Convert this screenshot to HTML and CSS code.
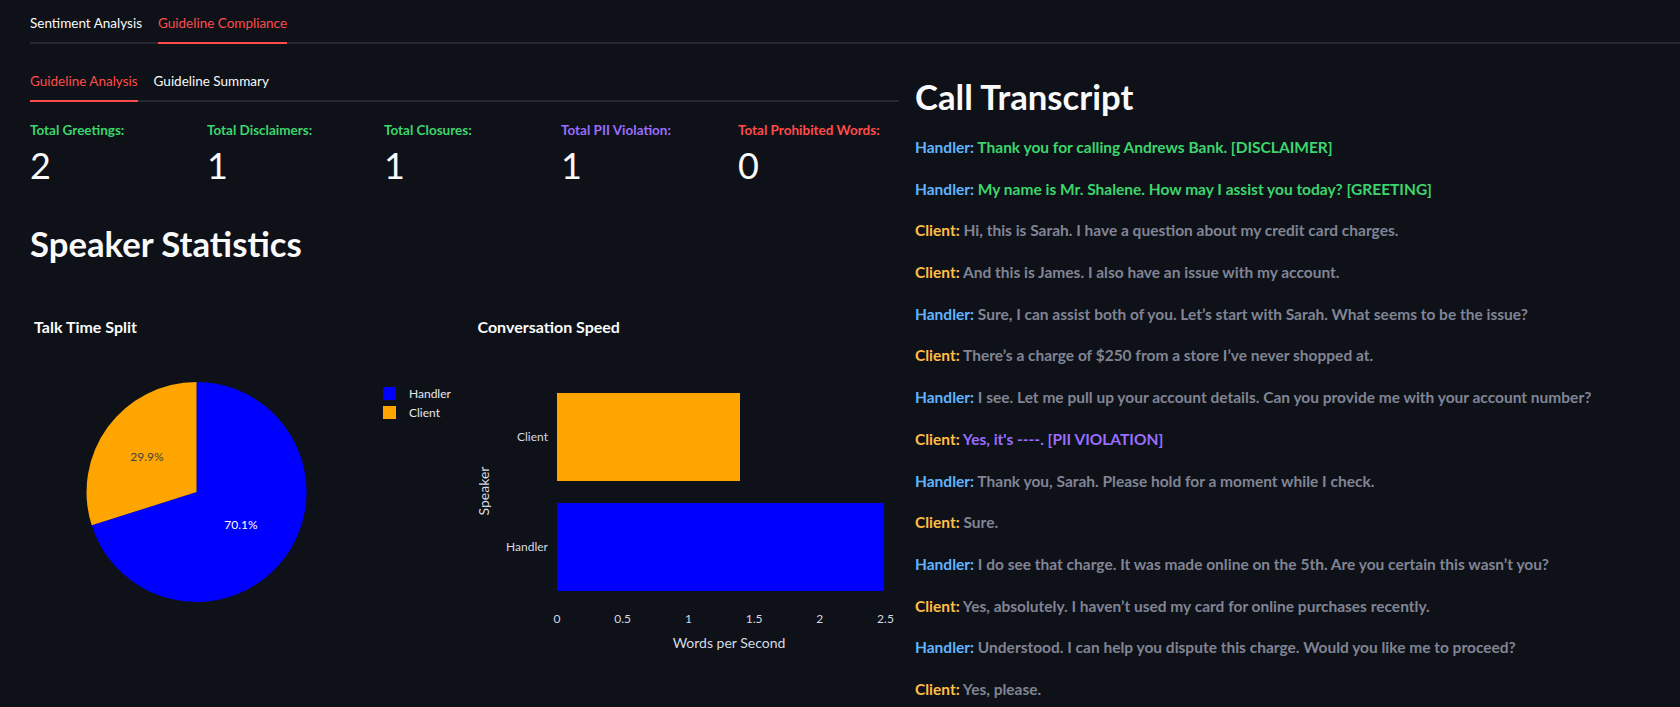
FILE: index.html
```html
<!DOCTYPE html>
<html lang="en">
<head>
<meta charset="utf-8">
<title>Guideline Compliance</title>
<link rel="stylesheet" href="styles.css">
</head>
<body>
<div class="main">
  <div class="tabs tabs-top">
    <div class="tab">Sentiment Analysis</div>
    <div class="tab active">Guideline Compliance</div>
  </div>
  <div class="content">
    <div class="col-left">
      <div class="tabs tabs-sub">
        <div class="tab active">Guideline Analysis</div>
        <div class="tab">Guideline Summary</div>
      </div>
      <div class="metrics">
        <div class="metric"><div class="metric-label green">Total Greetings:</div><div class="metric-value">2</div></div>
        <div class="metric"><div class="metric-label green">Total Disclaimers:</div><div class="metric-value">1</div></div>
        <div class="metric"><div class="metric-label green">Total Closures:</div><div class="metric-value">1</div></div>
        <div class="metric"><div class="metric-label violet">Total PII Violation:</div><div class="metric-value">1</div></div>
        <div class="metric"><div class="metric-label red">Total Prohibited Words:</div><div class="metric-value">0</div></div>
      </div>
      <h2 class="heading stats-heading">Speaker Statistics</h2>
      <div class="charts">
        <div class="chart">
          <div class="chart-title pie-title">Talk Time Split</div>
          <svg class="chart-svg" width="426" height="330" viewBox="0 0 426 330">
            <path d="M166.5 155 L166.5 45 A110 110 0 1 1 61.7 188.3 Z" fill="#0000ff"/>
            <path d="M166.5 155 L61.7 188.3 A110 110 0 0 1 166.5 45 Z" fill="#ffa500"/>
            <text x="117" y="124" class="pie-label dark" text-anchor="middle">29.9%</text>
            <text x="211" y="192" class="pie-label" text-anchor="middle">70.1%</text>
            <rect x="353" y="50" width="13" height="13" fill="#0000ff"/>
            <rect x="353" y="69" width="13" height="13" fill="#ffa500"/>
            <text x="379" y="61" class="legend">Handler</text>
            <text x="379" y="80" class="legend">Client</text>
          </svg>
        </div>
        <div class="chart">
          <div class="chart-title">Conversation Speed</div>
          <svg class="chart-svg" width="426" height="330" viewBox="0 0 426 330">
            <rect x="84" y="56" width="183" height="88" fill="#ffa500"/>
            <rect x="84" y="166" width="327" height="88" fill="#0000ff"/>
            <text x="75" y="104" class="tick" text-anchor="end">Client</text>
            <text x="75" y="214" class="tick" text-anchor="end">Handler</text>
            <text x="84" y="286" class="tick" text-anchor="middle">0</text>
            <text x="149.7" y="286" class="tick" text-anchor="middle">0.5</text>
            <text x="215.4" y="286" class="tick" text-anchor="middle">1</text>
            <text x="281.1" y="286" class="tick" text-anchor="middle">1.5</text>
            <text x="346.8" y="286" class="tick" text-anchor="middle">2</text>
            <text x="412.5" y="286" class="tick" text-anchor="middle">2.5</text>
            <text x="256" y="311" class="axis-title" text-anchor="middle">Words per Second</text>
            <text x="0" y="0" class="axis-title" text-anchor="middle" transform="translate(16 154) rotate(-90)">Speaker</text>
          </svg>
        </div>
      </div>
    </div>
    <div class="col-right">
      <h2 class="heading transcript-heading">Call Transcript</h2>
      <div class="transcript">
        <p class="line green"><span class="spk handler">Handler:</span> Thank you for calling Andrews Bank. [DISCLAIMER]</p>
        <p class="line green"><span class="spk handler">Handler:</span> My name is Mr. Shalene. How may I assist you today? [GREETING]</p>
        <p class="line gray"><span class="spk client">Client:</span> Hi, this is Sarah. I have a question about my credit card charges.</p>
        <p class="line gray"><span class="spk client">Client:</span> And this is James. I also have an issue with my account.</p>
        <p class="line gray"><span class="spk handler">Handler:</span> Sure, I can assist both of you. Let’s start with Sarah. What seems to be the issue?</p>
        <p class="line gray"><span class="spk client">Client:</span> There’s a charge of $250 from a store I’ve never shopped at.</p>
        <p class="line gray"><span class="spk handler">Handler:</span> I see. Let me pull up your account details. Can you provide me with your account number?</p>
        <p class="line violet"><span class="spk client">Client:</span> Yes, it's ----. [PII VIOLATION]</p>
        <p class="line gray"><span class="spk handler">Handler:</span> Thank you, Sarah. Please hold for a moment while I check.</p>
        <p class="line gray"><span class="spk client">Client:</span> Sure.</p>
        <p class="line gray"><span class="spk handler">Handler:</span> I do see that charge. It was made online on the 5th. Are you certain this wasn’t you?</p>
        <p class="line gray"><span class="spk client">Client:</span> Yes, absolutely. I haven’t used my card for online purchases recently.</p>
        <p class="line gray"><span class="spk handler">Handler:</span> Understood. I can help you dispute this charge. Would you like me to proceed?</p>
        <p class="line gray"><span class="spk client">Client:</span> Yes, please.</p>
      </div>
    </div>
  </div>
</div>
</body>
</html>
```
FILE: styles.css
```css
html, body {
  margin: 0;
  padding: 0;
  background: #0e1117;
  color: #fafafa;
  font-family: Lato, "Noto Sans", "Liberation Sans", sans-serif;
  overflow: hidden;
}

.main {
  padding-left: 30px;
  width: 1650px;
  height: 707px;
  overflow: hidden;
}

.tabs {
  display: flex;
  gap: 16px;
  border-bottom: 2px solid #262830;
}

.tab {
  font-size: 13.5px;
  line-height: 20px;
  color: #fafafa;
  border-bottom: 2px solid transparent;
  margin-bottom: -2px;
  white-space: nowrap;
}

.tab.active {
  color: #ff4b4b;
  border-bottom-color: #ff4b4b;
}

.tabs-top .tab {
  padding: 13px 0 9px;
}

.tabs-sub .tab {
  padding: 11px 0 9px;
}

.content {
  display: flex;
  gap: 16px;
  margin-top: 16px;
}

.col-left {
  width: 869px;
  flex: none;
}

.col-right {
  flex: 1;
  min-width: 0;
}

.metrics {
  display: grid;
  grid-template-columns: repeat(5, 1fr);
  gap: 16px;
  margin-top: 18px;
}

.metric-label {
  font-size: 13.5px;
  line-height: 20px;
  font-weight: 700;
  margin-bottom: 3px;
  white-space: nowrap;
}

.metric-value {
  font-size: 36px;
  line-height: 44px;
  font-weight: 400;
  color: #fafafa;
}

.green { color: #3dd56d; }
.violet { color: #9a6dff; }
.red { color: #ff4b4b; }
.gray { color: #808495; }

.heading {
  font-size: 34.7px;
  line-height: 43px;
  font-weight: 700;
  margin: 0;
  color: #fafafa;
  white-space: nowrap;
}

.stats-heading {
  margin-top: 35px;
}

.transcript-heading {
  margin-top: 15px;
}

.charts {
  display: grid;
  grid-template-columns: 1fr 1fr;
  gap: 16px;
  margin-top: 52px;
}

.chart-title {
  font-size: 16px;
  line-height: 20px;
  font-weight: 700;
  color: #fafafa;
  padding-left: 5px;
  white-space: nowrap;
}

.pie-title {
  padding-left: 4px;
}

.chart-svg {
  display: block;
}

.pie-label {
  font-size: 12px;
  fill: #ffffff;
  font-family: Lato, "Noto Sans", sans-serif;
}

.pie-label.dark {
  fill: #444444;
}

.legend {
  font-size: 12px;
  fill: #e6e9ef;
  font-family: Lato, "Noto Sans", sans-serif;
}

.tick {
  font-size: 12px;
  fill: #d5dae5;
  font-family: Lato, "Noto Sans", sans-serif;
}

.axis-title {
  font-size: 14px;
  fill: #d5dae5;
  font-family: Lato, "Noto Sans", sans-serif;
}

.transcript {
  margin-top: 17px;
}

.line {
  font-size: 15.5px;
  line-height: 25.6px;
  font-weight: 700;
  margin: 0 0 16.1px;
  white-space: nowrap;
}

.spk.handler { color: #60b4ff; }
.spk.client { color: #ffbd45; }
```
